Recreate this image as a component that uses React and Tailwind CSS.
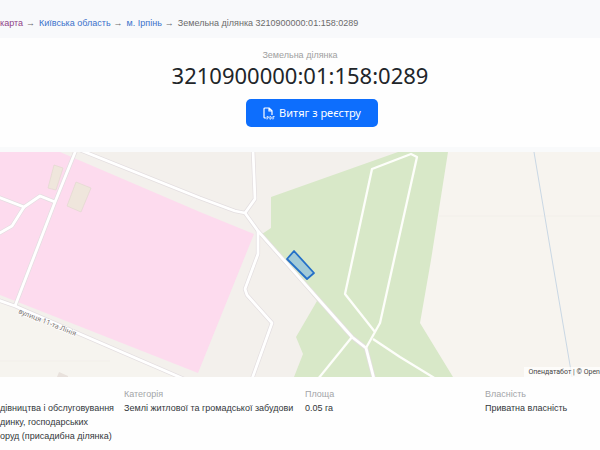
const crumbs = [
  { label: 'карта', color: 'text-[#8f3f88]' },
  { label: 'Київська область', color: 'text-[#3b72cb]' },
  { label: 'м. Ірпінь', color: 'text-[#3b72cb]' },
];

const details = [
  {
    label: '',
    lines: ['дівництва і обслуговування', 'динку, господарських', 'оруд (присадибна ділянка)'],
  },
  { label: 'Категорія', lines: ['Землі житлової та громадської забудови'] },
  { label: 'Площа', lines: ['0.05 га'] },
  { label: 'Власність', lines: ['Приватна власність'] },
];

const roads = [
  'M76 150 L55 202 L15 306',
  'M-2 197 L24 207 L40 196 L55 202',
  'M24 207 L12 226 L-2 234',
  'M253 150 L255 199 L245 213',
  'M258 231 L258 254 L245 289 L247 295 L272 323 L252 379',
  'M-2 300 L15 306 L184 379',
  'M80 150 L200 198 L235 211 L245 213 L258 231 L305 284 L352 337 L366 348 L374 379',
];

const forestPaths = [
  'M352 337 L318 379',
  'M366 348 L380 323 L394 260 L417 157 L411 154 L372 169 L345 294 L375 332',
  'M373 339 L400 357 L436 379',
];

function Breadcrumbs() {
  return (
    <nav className="flex items-center gap-1 overflow-hidden whitespace-nowrap bg-[#f8f9fb] pt-[17px] pb-[9px] text-[9px] leading-3 text-[#6b6b6b]">
      {crumbs.map((c) => (
        <span key={c.label} className="flex gap-[3px]">
          <a href="#" className={c.color}>{c.label}</a>
          <span>→</span>
        </span>
      ))}
      <span>Земельна ділянка 3210900000:01:158:0289</span>
    </nav>
  );
}

function PdfIcon() {
  return (
    <svg viewBox="0 0 12 13" className="h-[13px] w-3" fill="none" stroke="white" aria-hidden="true">
      <path d="M3 11 H2 Q1 11 1 10 V2 Q1 1 2 1 H6.2 L9 3.8 V8 M6 1 V4 H9" strokeWidth="1.2" />
      <path d="M4 12.5 V9.5 H4.8 Q5.5 9.5 5.5 10.3 T4.8 11.1 H4 M6.9 9.5 V12.2 H7.2 Q8.4 12.2 8.4 10.8 T7.2 9.5 H6.9 M9.9 12.5 V9.5 H11.6 M9.9 11 H11.2" strokeWidth="0.8" />
    </svg>
  );
}

function ParcelMap() {
  return (
    <div className="relative overflow-hidden">
      <svg viewBox="0 152 600 225" className="block w-full" fill="none" strokeLinejoin="round">
        <rect y="152" width="600" height="225" fill="#f3f0ec" />
        <path d="M398 152 H600 V377 H440 L420 323 Z" fill="#f7f4ef" />
        <path d="M0 301 L184 379 H0 Z" fill="#f6f4ef" />
        <path d="M0 152 H60 L200 212 L254 234 L198 373 L0 295 Z" fill="#fddbee" />
        <path d="M271 197 L398 152 H448 L431 260 L420 323 L453 377 H294 L303 354 L296 337 L317 301 L262 234 L271 228 Z" fill="#d8e8c8" />
        <path d="M54 165 L63 168 L56 190 L48 188 Z M76 182 L91 188 L81 212 L67 206 Z" fill="#efe6dc" stroke="#e3d8d0" strokeWidth="0.7" />
        <path d="M439 216 H600 M0 361 H110" stroke="#f2efea" strokeWidth="1" />
        <path d="M534 152 L553 265 L572 377" stroke="#c9d7e4" strokeWidth="1" />
        <path d="M57 377 L59 372 L68 376 V377 Z" fill="#e8e1dc" />
        {roads.map((d) => (
          <path key={d} d={d} stroke="#e3dee0" strokeWidth="4.2" />
        ))}
        {roads.map((d) => (
          <path key={d} d={d} stroke="#ffffff" strokeWidth="2.8" />
        ))}
        {forestPaths.map((d) => (
          <path key={d} d={d} stroke="#fdfefa" strokeWidth="2.3" />
        ))}
        <path d="M287 259 L294 251 L314 273 L307 279 Z" fill="#a3cbd7" stroke="#2470c8" strokeWidth="1.8" />
        <text x="18" y="313" transform="rotate(22 18 313)" fontSize="7" fontFamily="Noto Sans, sans-serif" fill="#77706c" stroke="#ffffff" strokeWidth="1.5" paintOrder="stroke">
          вулиця 11-та Лінія
        </text>
      </svg>
      <div className="absolute right-0 bottom-0 bg-white/70 pl-1 font-['Roboto'] text-[7px] leading-[10px] whitespace-nowrap text-[#444]">
        Опендатабот | © Open
      </div>
    </div>
  );
}

export default function App() {
  return (
    <div className="min-h-screen bg-[#fefefe] font-['Liberation_Sans',sans-serif] text-[#33373b]">
      <Breadcrumbs />
      <header className="flex flex-col items-center pt-[11px]">
        <p className="text-[9px] leading-3 text-[#a0a0a0]">Земельна ділянка</p>
        <h1 className="font-['Noto_Sans'] text-[22px] leading-7 text-[#212529]">3210900000:01:158:0289</h1>
        <button className="mt-2.5 mb-5 ml-6 flex h-7 w-[132px] items-center justify-center gap-1 rounded-[5px] bg-[#0d6efd] font-['Noto_Sans'] text-[11px] leading-4 text-white">
          <PdfIcon />
          Витяг з реєстру
        </button>
      </header>
      <div className="h-[5px] bg-[#f9fafb]" />
      <ParcelMap />
      <dl className="grid grid-cols-[124fr_181fr_180fr_115fr] pt-2.5 text-[9px] whitespace-nowrap">
        {details.map((d) => (
          <div key={d.lines[0]}>
            <dt className="h-[14px] leading-[14px] text-[#a3a5a8]">{d.label}</dt>
            <dd className="leading-[14px]">
              {d.lines.map((line) => (
                <div key={line}>{line}</div>
              ))}
            </dd>
          </div>
        ))}
      </dl>
    </div>
  );
}
